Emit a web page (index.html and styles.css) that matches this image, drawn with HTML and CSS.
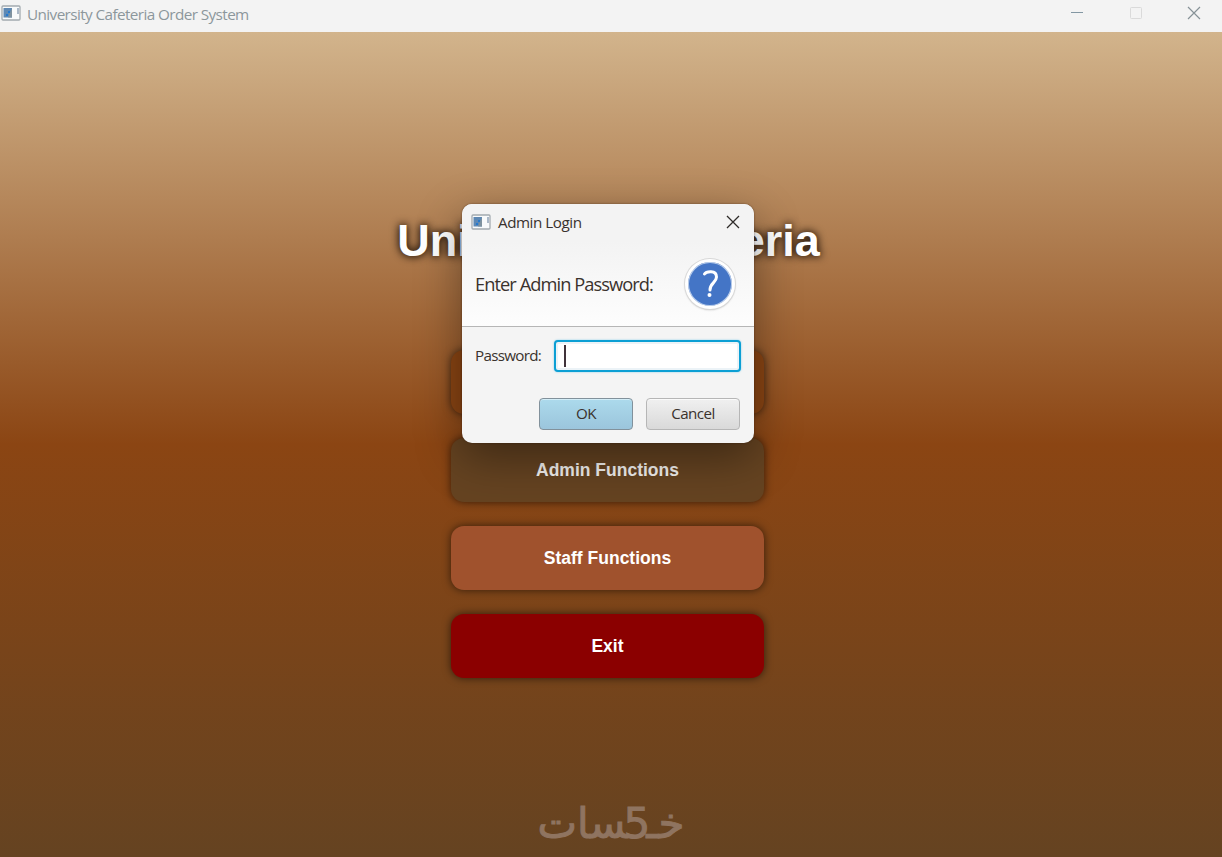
FILE: index.html
```html
<!DOCTYPE html>
<html lang="en">
<head>
  <meta charset="UTF-8">
  <title>University Cafeteria Order System</title>
  <link rel="stylesheet" href="styles.css">
</head>
<body>
  <div class="titlebar">
    <svg class="app-icon" width="20" height="16" viewBox="0 0 20 16">
      <rect x="1" y="1" width="18" height="14" rx="1" fill="#f8fafb" stroke="#a3abb0" stroke-width="1.3"/>
      <rect x="2.500" y="3" width="8.500" height="9.500" fill="#5d88b4"/>
      <path d="M7 12.500 L11 3 V12.500 Z" fill="#7f929f"/>
      <path d="M5 10 H7 M7 7 H9" stroke="#2479cf" stroke-width="2"/>
      <path d="M17 3 V9" stroke="#8197ad" stroke-width="1.3"/>
    </svg>
    <span class="window-title">University Cafeteria Order System</span>
    <div class="window-controls">
      <svg width="14" height="14" viewBox="0 0 14 14"><path d="M1 6.500 H13" stroke="#8397a3"/></svg>
      <svg width="14" height="14" viewBox="0 0 14 14"><rect x="1.500" y="1.500" width="11" height="11" rx="1" fill="none" stroke="#dadada"/></svg>
      <svg width="14" height="14" viewBox="0 0 14 14"><path d="M1 1 L13 13 M13 1 L1 13" stroke="#879297" stroke-width="1.200"/></svg>
    </div>
  </div>

  <div class="main">
    <h1>University Cafeteria</h1>

    <div class="menu">
      <button class="menu-btn order"></button>
      <button class="menu-btn admin">Admin Functions</button>
      <button class="menu-btn staff">Staff Functions</button>
      <button class="menu-btn exit">Exit</button>
    </div>

    <div class="brand" lang="ar" dir="rtl"><span>خـ</span><span class="five">5</span><span>&zwj;سات</span></div>
  </div>

  <div class="dialog">
    <div class="dialog-title">
      <svg class="app-icon" width="20" height="16" viewBox="0 0 20 16">
        <rect x="1" y="1" width="18" height="14" rx="1" fill="#f8fafb" stroke="#a3abb0" stroke-width="1.3"/>
        <rect x="2.500" y="3" width="8.500" height="9.500" fill="#5d88b4"/>
        <path d="M7 12.500 L11 3 V12.500 Z" fill="#7f929f"/>
        <path d="M5 10 H7 M7 7 H9" stroke="#2479cf" stroke-width="2"/>
        <path d="M17 3 V9" stroke="#8197ad" stroke-width="1.3"/>
      </svg>
      <span>Admin Login</span>
      <svg class="close" width="14" height="14" viewBox="0 0 14 14"><path d="M1 1 L13 13 M13 1 L1 13" stroke="#2e2b29" stroke-width="1.300"/></svg>
    </div>
    <div class="dialog-header">
      <span class="header-text">Enter Admin Password:</span>
      <div class="help-icon">
        <svg width="44" height="44" viewBox="0 0 44 44">
          <path d="M16.500 12 C18 9.500 28.500 7.500 28.500 15 C28.500 20.500 22 21 22 28" fill="none" stroke="#fff" stroke-width="3" stroke-linecap="round"/>
          <circle cx="21.500" cy="33" r="2" fill="#fff"/>
        </svg>
      </div>
    </div>
    <div class="dialog-row">
      <label for="password">Password:</label>
      <div class="field" id="password"><span class="caret"></span></div>
    </div>
    <div class="dialog-buttons">
      <button class="ok">OK</button>
      <button class="cancel">Cancel</button>
    </div>
  </div>
</body>
</html>
```
FILE: styles.css
```css
* {
  box-sizing: border-box;
}

body {
  margin: 0;
  height: 857px;
  display: flex;
  flex-direction: column;
  overflow: hidden;
  font-family: 'Open Sans', 'Noto Sans', sans-serif;
}

button {
  border: none;
  padding: 0;
  font-family: inherit;
}

svg {
  display: block;
  flex-shrink: 0;
}

.titlebar {
  height: 32px;
  flex-shrink: 0;
  display: flex;
  align-items: flex-start;
  padding: 5px 21px 0 1px;
  background: #f3f3f3;
}

.window-title {
  margin-left: 6px;
  font-size: 15.3px;
  line-height: 18px;
  letter-spacing: -0.6px;
  color: #8c979c;
}

.window-controls {
  margin-left: auto;
  margin-top: 1px;
  display: flex;
  gap: 44.5px;
}

.main {
  flex: 1;
  display: flex;
  flex-direction: column;
  align-items: center;
  padding: 183px 7px 0 0;
  background: linear-gradient(to bottom, #d2b48c, #8b4513 50%, #654321);
}

h1 {
  margin: 0 0 0 2px;
  font-family: 'Liberation Sans', Arial, sans-serif;
  font-size: 45px;
  line-height: 52px;
  color: white;
  text-shadow: 0 0 10px rgba(0, 0, 0, 0.8), 0 0 7px rgba(50, 25, 0, 0.6);
}

.menu {
  margin-top: 83px;
  display: flex;
  flex-direction: column;
  gap: 24px;
}

.menu-btn {
  width: 313px;
  height: 64px;
  border-radius: 13px;
  font-family: 'Liberation Sans', Arial, sans-serif;
  font-size: 17.5px;
  font-weight: bold;
  color: white;
  box-shadow: 0 0 9px rgba(0, 0, 0, 0.6);
}

.order {
  background: #8b4513;
}

.admin {
  background: #654321;
  color: #f4f2f0;
}

.staff {
  background: #a0522d;
}

.exit {
  background: #8b0000;
}

.brand {
  display: flex;
  margin-top: 121px;
  margin-left: 7px;
  font-family: 'DejaVu Sans', sans-serif;
  font-size: 42px;
  line-height: 50px;
  color: #8f7460;
  -webkit-text-stroke: 1px #8f7460;
}

.five {
  margin: 0 -4px;
}

/* modal window over the menu */
.dialog {
  position: absolute;
  left: 462px;
  top: 204px;
  width: 292px;
  height: 239px;
  border-radius: 10px;
  overflow: hidden;
  background: #f4f4f4;
  color: #3a322d;
  box-shadow: 0 0 2px rgba(50, 25, 10, 0.6), 0 14px 45px rgba(0, 0, 0, 0.4);
}

.dialog-title {
  height: 37px;
  display: flex;
  align-items: center;
  padding: 0 14px 1px 9px;
  background: #f3f3f3;
  font-size: 15.2px;
  letter-spacing: -0.45px;
}

.dialog-title span {
  margin-left: 7px;
}

.close {
  margin-left: auto;
}

.dialog-header {
  height: 86px;
  display: flex;
  align-items: center;
  justify-content: space-between;
  padding: 0 19px 0 13px;
  background: linear-gradient(to bottom, #f3f3f3, #fdfdfd);
  border-bottom: 1px solid #b6b6b6;
}

.header-text {
  font-size: 18.3px;
  letter-spacing: -0.95px;
}

.help-icon {
  width: 50px;
  height: 50px;
  border: 3px solid white;
  border-radius: 50%;
  background: #4475c6;
  box-shadow: inset 0 0 0 1px #b9cdea, 0 0 0 1px #d8d8d8, 0 1px 2px rgba(0, 0, 0, 0.25);
}

.dialog-row {
  display: flex;
  align-items: center;
  padding: 13px 13px 0;
  font-size: 15.2px;
  letter-spacing: -0.7px;
}

.dialog-row label {
  width: 79px;
  padding-bottom: 2px;
}

.field {
  flex: 1;
  height: 32px;
  padding: 3px 8px;
  border: 2px solid #0c9fd4;
  border-radius: 4px;
  background: white;
  box-shadow: 0 0 2px #7cc8e8, inset 0 0 0 2px #ecf3f7;
}

.caret {
  display: block;
  width: 1.5px;
  height: 22px;
  background: #40333a;
}

.dialog-buttons {
  display: flex;
  justify-content: flex-end;
  gap: 13px;
  padding: 26px 14px 0 0;
}

.dialog-buttons button {
  width: 94px;
  height: 32px;
  padding-bottom: 2px;
  border-radius: 4px;
  font-size: 15.2px;
  letter-spacing: -0.6px;
  color: #3a322d;
}

.dialog-buttons .ok {
  border: 1px solid #82919b;
  background: linear-gradient(to bottom, #acdaec, #9bc5dc);
  box-shadow: inset 0 1px 0 #d3edf7;
}

.dialog-buttons .cancel {
  border: 1px solid #b6b6b6;
  background: linear-gradient(to bottom, #f0f0f0, #d9d9d9);
  box-shadow: inset 0 1px 0 #fafafa;
}
```
